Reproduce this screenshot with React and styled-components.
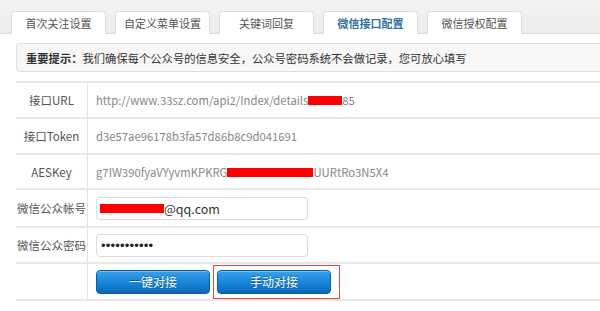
import styled, { createGlobalStyle } from "styled-components";

const Global = createGlobalStyle`
  body {
    margin: 0;
    background: #fff;
    font-family: "Noto Sans CJK SC", "Open Sans", sans-serif;
    font-size: 12px;
  }
`;

const TabBar = styled.div`
  display: flex;
  gap: 9px;
  align-items: flex-end;
  height: 34px;
  padding-left: 11px;
  box-sizing: border-box;
  background: linear-gradient(#f3f3f3, #ececec);
  border-bottom: 1px solid #dcdcdc;
`;

const Tab = styled.div`
  width: 95px;
  height: 23px;
  box-sizing: border-box;
  margin-bottom: -1px;
  background: #fff;
  border: 1px solid #dcdcdc;
  border-bottom: none;
  border-radius: 4px 4px 0 0;
  display: flex;
  align-items: center;
  justify-content: center;
  font-size: 11px;
  color: ${({ active }) => (active ? "#2f6fa8" : "#555")};
  font-weight: ${({ active }) => (active ? "bold" : "normal")};
`;

const Notice = styled.div`
  margin: 9px 0 9px 16px;
  height: 29px;
  box-sizing: border-box;
  padding-left: 9px;
  display: flex;
  align-items: center;
  background: #f7f7f7;
  border: 1px solid #e0e0e0;
  border-right: none;
  border-radius: 4px 0 0 4px;
  color: #333;
  font-size: 11.3px;
`;

const Strong = styled.b`
  font-weight: bold;
`;

const Table = styled.div`
  margin-left: 16px;
  border-bottom: 2px solid #e8e8e8;
`;

const Row = styled.div`
  display: flex;
  height: ${({ h }) => h}px;
  border-top: 2px solid #e8e8e8;
  box-sizing: border-box;
`;

const Label = styled.div`
  width: 71px;
  flex: none;
  border-right: 1px solid #e3e3e3;
  display: flex;
  align-items: center;
  justify-content: center;
  color: #555;
  font-size: 11.5px;
  white-space: nowrap;
`;

const Value = styled.div`
  padding-left: 8px;
  display: flex;
  align-items: center;
  gap: ${({ gap }) => gap ?? 8}px;
  color: #888;
  font-size: 11.3px;
  white-space: nowrap;
`;

const Redact = styled.span`
  display: inline-block;
  width: ${({ w }) => w}px;
  height: 9px;
  background: #ff0000;
`;

const Input = styled.div`
  width: 212px;
  height: 23px;
  box-sizing: border-box;
  border: 1px solid #dcdcdc;
  border-radius: 4px;
  padding-left: 3px;
  display: flex;
  align-items: center;
  color: #333;
  font-size: 12.5px;
`;

const Dots = styled.span`
  padding-left: 1px;
  font-family: "Liberation Sans", sans-serif;
  font-size: 13px;
  letter-spacing: 0.2px;
  color: #222;
`;

const Button = styled.div`
  width: 114px;
  height: 24px;
  box-sizing: border-box;
  border: 1px solid #0b5da3;
  border-radius: 4px;
  background: linear-gradient(#37a3ee, #1a86da 50%, #0b67b8);
  box-shadow: inset 0 1px 0 rgba(255, 255, 255, 0.3);
  color: #fff;
  font-size: 12px;
  text-shadow: 0 -1px 0 rgba(0, 0, 0, 0.35);
  display: flex;
  align-items: center;
  justify-content: center;
`;

const Highlight = styled.div`
  border: 1px solid #e64646;
  padding: 4px 8px 4px 3px;
`;

export default function App() {
  return (
    <>
      <Global />
      <TabBar>
        <Tab>首次关注设置</Tab>
        <Tab>自定义菜单设置</Tab>
        <Tab>关键词回复</Tab>
        <Tab active>微信接口配置</Tab>
        <Tab>微信授权配置</Tab>
      </TabBar>
      <Notice>
        <Strong>重要提示：</Strong>我们确保每个公众号的信息安全，公众号密码系统不会做记录，您可放心填写
      </Notice>
      <Table>
        <Row h={36}>
          <Label>接口URL</Label>
          <Value>
            <span>
              http://www.33sz.com/api2/Index/details
              <Redact w={34} />
              85
            </span>
          </Value>
        </Row>
        <Row h={36}>
          <Label>接口Token</Label>
          <Value>d3e57ae96178b3fa57d86b8c9d041691</Value>
        </Row>
        <Row h={35}>
          <Label>AESKey</Label>
          <Value>
            <span>
              g7IW390fyaVYyvmKPKRG
              <Redact w={86} />
              UURtRo3N5X4
            </span>
          </Value>
        </Row>
        <Row h={38}>
          <Label>微信公众帐号</Label>
          <Value>
            <Input>
              <Redact w={64} />
              @qq.com
            </Input>
          </Value>
        </Row>
        <Row h={36}>
          <Label>微信公众密码</Label>
          <Value>
            <Input>
              <Dots>•••••••••••</Dots>
            </Input>
          </Value>
        </Row>
        <Row h={37}>
          <Label />
          <Value gap={3}>
            <Button>一键对接</Button>
            <Highlight>
              <Button>手动对接</Button>
            </Highlight>
          </Value>
        </Row>
      </Table>
    </>
  );
}
